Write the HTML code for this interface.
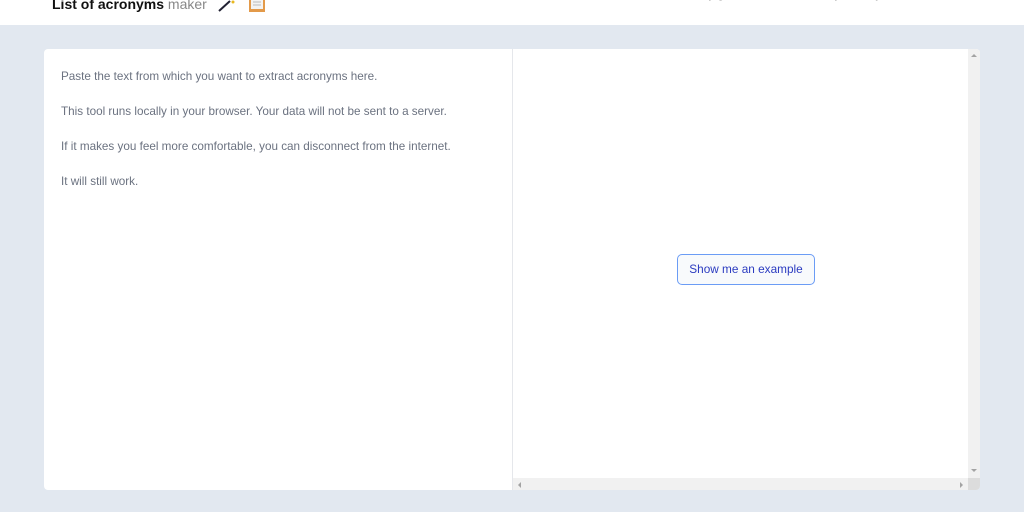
<!DOCTYPE html>
<html><head><style>
*{margin:0;padding:0;box-sizing:border-box}
body{width:1024px;height:512px;overflow:hidden;background:#e2e8f0;font-family:"Liberation Sans",sans-serif;position:relative}
#hdr{position:absolute;left:0;top:0;width:1024px;height:25px;background:#fff}
.title{position:absolute;left:52px;top:-4px;font-size:14px;font-weight:bold;color:#111}
.title span{font-weight:normal;color:#888}
.sub{position:absolute;left:646px;top:-11px;font-size:11.5px;color:#999;white-space:nowrap}
#panel{position:absolute;left:44px;top:49px;width:936px;height:441px;background:#fff;border-radius:4px;overflow:hidden}
#left{position:absolute;left:0;top:0;width:469px;height:441px;border-right:1px solid #e5e7eb;padding:20px 17px;color:#6b7280;font-size:11.7px}
#left p{margin-bottom:20px;line-height:15px}
#vs{position:absolute;left:924px;top:0;width:12px;height:429px;background:#f1f1f1}
#hs{position:absolute;left:469px;top:429px;width:455px;height:12px;background:#f1f1f1}
#corner{position:absolute;left:924px;top:429px;width:12px;height:12px;background:#dcdcdc}
.btn{position:absolute;left:633px;top:205px;width:138px;height:31px;border:1px solid #6b9cf5;border-radius:5px;background:#f8fafc;color:#2b3bc0;font-size:11.8px;text-align:center;line-height:29px}
</style></head><body>
<div id="hdr">
<div class="title">List of acronyms <span>maker</span></div>
<svg style="position:absolute;left:218px;top:0" width="20" height="12"><path d="M1 11 L12 1" stroke="#223" stroke-width="2"/><circle cx="15" cy="2" r="1.5" fill="#e8b820"/></svg>
<svg style="position:absolute;left:248px;top:0" width="18" height="13"><rect x="1" y="-3" width="16" height="15" fill="#e39a4a"/><rect x="3" y="-3" width="12" height="12" fill="#f3f3f3"/><path d="M5 2h8M5 5h8" stroke="#bbb"/></svg>
<div class="sub">Automatically generate a list of acronyms for your document</div>
</div>
<div id="panel">
<div id="left">
<p>Paste the text from which you want to extract acronyms here.</p>
<p>This tool runs locally in your browser. Your data will not be sent to a server.</p>
<p>If it makes you feel more comfortable, you can disconnect from the internet.</p>
<p>It will still work.</p>
</div>
<div class="btn">Show me an example</div>
<div id="vs"><svg width="12" height="429"><path d="M3 8l3-3 3 3z" fill="#a3a3a3"/><path d="M3 420l3 3 3-3z" fill="#a3a3a3"/></svg></div>
<div id="hs"><svg width="455" height="12"><path d="M8 3l-3 3 3 3z" fill="#a3a3a3"/><path d="M447 3l3 3-3 3z" fill="#a3a3a3"/></svg></div>
<div id="corner"></div>
</div>
</body></html>
